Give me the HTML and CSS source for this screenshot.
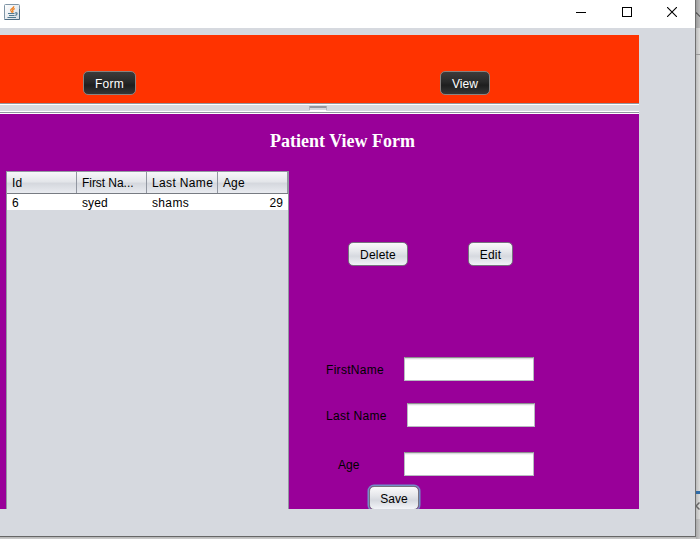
FILE: index.html
```
<!DOCTYPE html>
<html lang="en">
<head>
<meta charset="utf-8">
<title>Patient View Form</title>
<link rel="stylesheet" href="styles.css">
</head>
<body>
<div class="desktop">
  <main class="window">
    <header class="titlebar">
      <svg class="java" width="16" height="16" viewBox="0 0 16 16">
        <defs><linearGradient id="g" x2="1" y2="1"><stop stop-color="#fff"/><stop offset="1" stop-color="#d5dde4"/></linearGradient></defs>
        <rect x=".5" y=".5" width="15" height="15" rx="1" fill="url(#g)" stroke="#7f95a6"/>
        <path d="M.5 15.5h15V5" fill="none" stroke="#4c6b82"/>
        <path d="M9.8 2.3C10 4.500 6 4.500 6.800 6.500L8 8.500M10.800 4.600C8 5.600 8.500 6.500 9 7.400L8.600 8.600" fill="none" stroke="#ef8122" stroke-width="1.300"/>
        <path d="M4 9.500h6.500M5 11.500h5.500M3.500 13.500h8.500M11 9c3-1 2.300 2 .3 2.400" fill="none" stroke="#51798f" stroke-width="1.200"/>
      </svg>
      <div class="controls">
        <svg width="10" height="10" viewBox="0 0 10 10"><path d="M0 5.500h10" stroke="#000"/></svg>
        <svg width="10" height="10" viewBox="0 0 10 10"><rect x=".5" y=".5" width="9" height="9" fill="none" stroke="#000"/></svg>
        <svg width="10" height="10" viewBox="0 0 10 10"><path d="M0 0L10 10M10 0L0 10" stroke="#000" stroke-width="1.100"/></svg>
      </div>
    </header>
    <section class="content">
      <nav class="toolbar">
        <button class="dark form">Form</button>
        <button class="dark view">View</button>
      </nav>
      <div class="divider"><i class="grip"></i></div>
      <section class="patients">
        <h1>Patient View Form</h1>
        <div class="columns">
          <div class="table">
            <div class="row head"><span>Id</span><span class="tight">First Na...</span><span class="wide">Last Name</span><span>Age</span></div>
            <div class="row data"><span>6</span><span>syed</span><span class="wide">shams</span><span class="num">29</span></div>
          </div>
          <div class="side">
            <div class="actions"><button class="light delete">Delete</button><button class="light edit">Edit</button></div>
            <div class="field first"><label for="first">FirstName</label><input id="first"></div>
            <div class="field last"><label for="last">Last Name</label><input id="last"></div>
            <div class="field age"><label for="age">Age</label><input id="age"></div>
            <button class="light save">Save</button>
          </div>
        </div>
      </section>
    </section>
  </main>
  <aside class="behind">
    <div class="b1"><svg width="4" height="28" viewBox="0 0 4 28"><path d="M0 12.500L4 16.500" stroke="#555" stroke-width="1.200"/></svg></div>
    <div class="b2"></div>
    <div class="b3"></div>
    <div class="b4"></div>
    <div class="b5"><svg width="4" height="28" viewBox="0 0 4 28"><path d="M3.500 8.500L0 12L3.500 15.500" fill="none" stroke="#666" stroke-width="1.500"/></svg></div>
    <div class="b6"></div>
  </aside>
</div>
</body>
</html>
```

FILE: styles.css
```
* { box-sizing: border-box; }
body { margin: 0; font: 12px/16px "Liberation Sans", Arial, sans-serif; color: #000; }
.desktop { width: 700px; height: 539px; display: grid; grid-template-columns: 696px 4px; align-items: start; overflow: hidden; background: linear-gradient(#b5b5b5, #cfcfcf) 0 537px / 100% 2px no-repeat #ccc; }
.window { height: 537px; background: #d6d9df; border-right: 1px solid #707070; border-bottom: 1px solid #666; }
.titlebar { height: 28px; background: #fff; display: flex; justify-content: space-between; padding: 4px 18px 0 4px; }
.controls { display: flex; gap: 35.5px; padding-top: 3px; }
svg { display: block; }
.content { margin-top: 7px; width: 639px; height: 474px; overflow: hidden; }
.toolbar { height: 68px; background: #ff3300; display: flex; padding-top: 36px; }
button { font: inherit; height: 24px; padding: 2px 0 0; border-radius: 5px; }
.dark { color: #fff; background: linear-gradient(#3b3b3b, #292929 45%, #1e1e1e 60%, #363636); border: 1px solid #8a8381; }
.form { width: 53px; margin-left: 83px; letter-spacing: .25px; }
.view { width: 50px; margin-left: 304px; letter-spacing: .1px; }
.divider { height: 11px; background: linear-gradient(#9297a1 0 1px, #fff 1px 2px, #d6d9df 2px 8px, #fff 8px 9px, #9297a1 9px 10px, #fff 10px); }
.grip { display: block; width: 18px; height: 5px; position: relative; left: 309px; top: 3px; border: 1px solid #b4b8c0; border-top: 2px solid #9398a1; border-bottom-color: #fff; border-radius: 1px; background: #d6d9df; }
.patients { height: 395px; background: #990099; overflow: hidden; }
h1 { margin: 0; padding: 17px 0 0 270px; height: 57px; font: bold 18px/21px "Liberation Serif", serif; color: #fff; white-space: nowrap; }
.columns { display: flex; height: 338px; }
.table { width: 283px; margin-left: 6px; border: 1px solid #9297a1; border-bottom: 0; background: #d6d9df; }
.row { display: grid; grid-template-columns: 70px 70px 71px 70px; letter-spacing: .1px; }
.row span { padding-left: 5px; white-space: nowrap; }
.row .tight { letter-spacing: -.05px; }
.row .wide { letter-spacing: .35px; }
.head { height: 22px; line-height: 23px; border-bottom: 1px solid #777b82; background: linear-gradient(#f7f8fa, #e4e6ea 45%, #d5d8de 55%, #e9ebf0); }
.head span { height: 21px; border-right: 1px solid #9297a1; }
.data { height: 16px; line-height: 18px; background: #fff; }
.row .num { text-align: right; padding-right: 5px; }
.side { flex: 1; }
.actions { display: flex; padding: 71px 0 0 59px; }
.light { color: #000; background: linear-gradient(#fafafb, #e4e6ea 40%, #d6d9df 60%, #f2f4f8); border: 1px solid #77727f; }
.delete { width: 60px; letter-spacing: .2px; }
.edit { width: 45px; margin-left: 60px; letter-spacing: .2px; }
.field { display: flex; height: 24px; line-height: 26px; }
.field label { letter-spacing: .3px; white-space: nowrap; }
.first { margin-top: 91px; padding-left: 37px; }
.last { margin-top: 22px; padding-left: 37px; }
.age { margin-top: 25px; padding-left: 49px; }
.first label { width: 78px; }
.last label { width: 81px; }
.age label { width: 66px; letter-spacing: 0; }
input { width: 130px; height: 24px; margin: 0; padding: 0 5px; font: inherit; border: 1px solid #b8bbc1; border-top-color: #8d8e8f; border-radius: 0; background: linear-gradient(#dadbdd 0 1px, #f4f4f5 1px 2px, #fff 2px); outline: 0; }
.last input { width: 128px; }
.save { display: block; width: 50px; margin: 10px 0 0 80px; box-shadow: 0 0 0 1.500px #738fc6; }
.behind div { width: 4px; }
.b1 { height: 28px; background: linear-gradient(90deg, #9b9b9b, #bbb); }
.b2 { height: 27px; background: linear-gradient(90deg, #bbb, #dededc); border-bottom: 1px solid #999; }
.b3 { height: 436px; background: linear-gradient(90deg, #bbb, #dededc); }
.b4 { height: 3px; background: #2f6ba7; }
.b5 { height: 25px; background: linear-gradient(90deg, #bbb, #dededc); }
.b6 { height: 20px; background: linear-gradient(90deg, #aaa, #c8c8c8); }
```
